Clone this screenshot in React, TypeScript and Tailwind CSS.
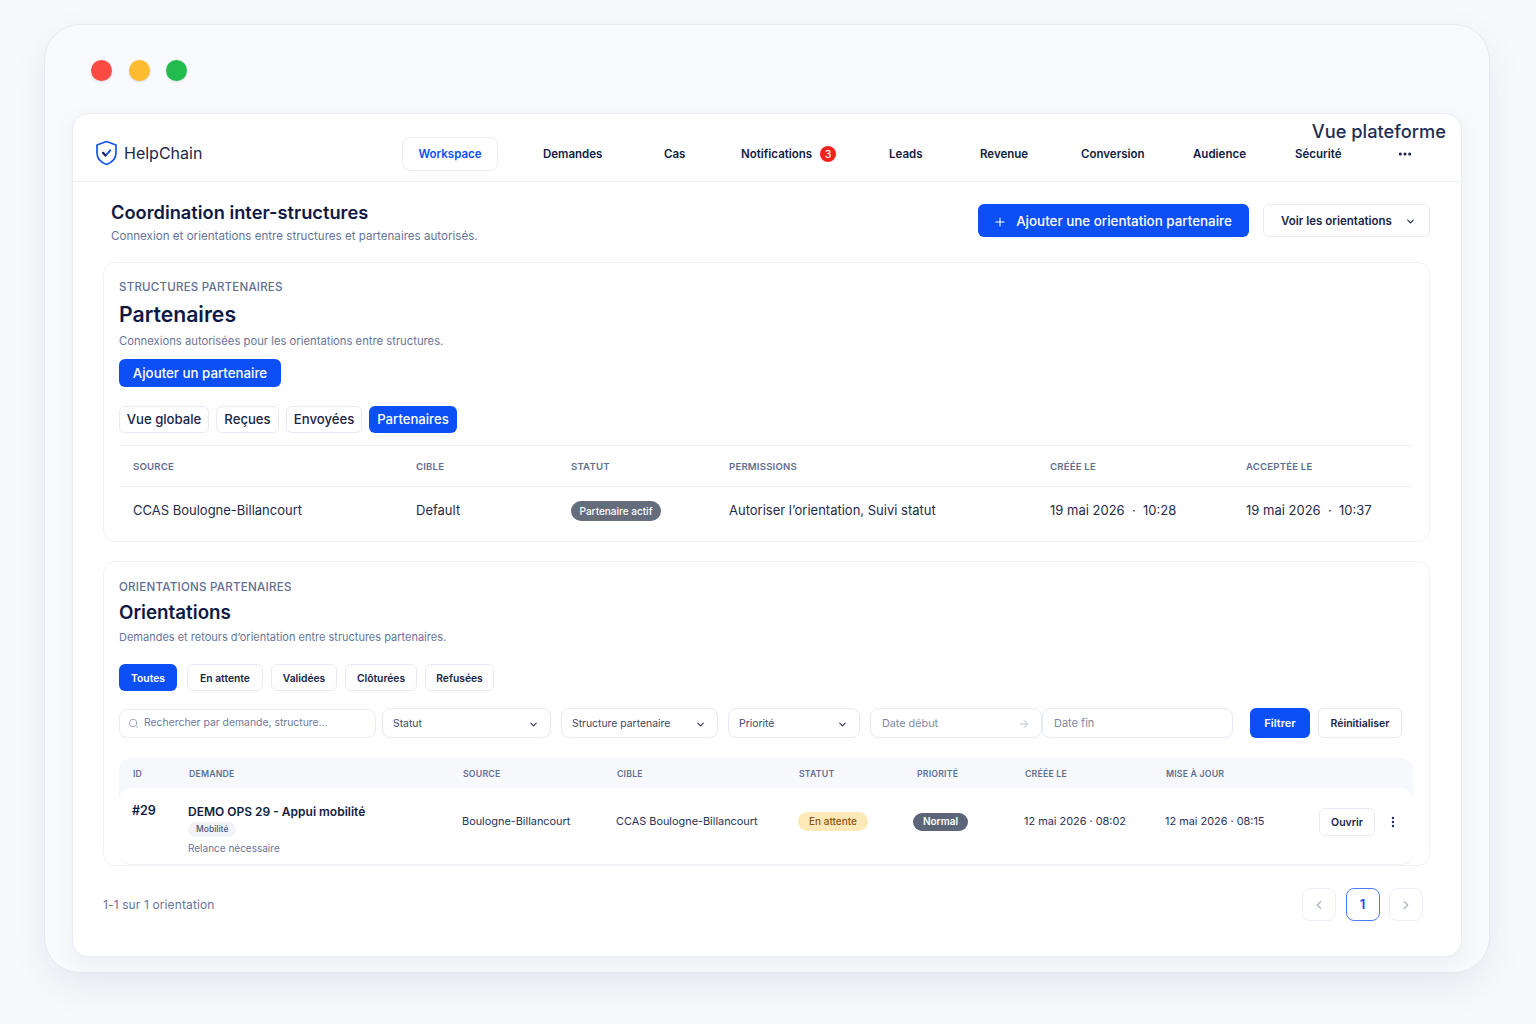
import { ArrowRight, ChevronDown, ChevronLeft, ChevronRight, Ellipsis, EllipsisVertical, Plus, Search } from "lucide-react";

const navItems = [
  { label: "Demandes", className: "ml-[45px] w-[121px] pt-[2px]" },
  { label: "Cas", className: "w-[77px] pt-[2px]" },
];
const navItemsEnd = [
  { label: "Leads", className: "w-[91px] pt-[2px]" },
  { label: "Revenue", className: "w-[101px] pt-[2px]" },
  { label: "Conversion", className: "w-[112px] pt-[2px]" },
  { label: "Audience", className: "w-[102px] pt-[2px]" },
  { label: "Sécurité", className: "w-[102px] pt-[2px]" },
];
const orientationTabs = [
  { label: "En attente", className: "ml-[10px] w-[76px]" },
  { label: "Validées", className: "ml-[8px] w-[66px]" },
  { label: "Clôturées", className: "ml-[8px] w-[72px]" },
  { label: "Refusées", className: "ml-[8px] w-[69px]" },
];
const partnerCols = "grid grid-cols-[283px_155px_158px_321px_196px_1fr]";
const orientationCols = "grid grid-cols-[56px_274px_154px_182px_115px_111px_141px_154px_1fr]";

function HeaderCell({ children, small }: { children?: React.ReactNode; small?: boolean }) {
  return (
    <div className={`font-semibold tracking-[0.02em] text-[#5f6f92] ${small ? "text-[8.75px]" : "text-[9.6px]"}`}>{children}</div>
  );
}

function Logo() {
  return (
    <svg width="23" height="26" viewBox="0 0 23 26" fill="none">
      <path
        d="M11.5 1.5 21 5v8c0 5.6-3.8 9.4-9.5 11.5C5.8 22.4 2 18.6 2 13V5l9.5-3.5Z"
        stroke="#1553f0"
        strokeWidth="1.7"
        strokeLinejoin="round"
      />
      <path d="m8 12.8 2.6 2.8 4.6-5.2" stroke="#1553f0" strokeWidth="2" strokeLinecap="round" strokeLinejoin="round" />
      <path d="m8 12.8 2.6 2.8" stroke="#16265c" strokeWidth="2" strokeLinecap="round" />
    </svg>
  );
}

function SelectBox({ label, className }: { label: string; className: string }) {
  return (
    <div className={`flex h-[30px] items-center justify-between rounded-lg border border-[#e5e9f3] bg-white pl-[10px] pr-[11px] pt-[2px] text-[10.4px] text-[#3c4766] ${className}`}>
      {label}
      <ChevronDown className="h-[11px] w-[11px] text-[#2c3654]" strokeWidth={2.4} />
    </div>
  );
}

function PageButton({ children, active }: { children: React.ReactNode; active?: boolean }) {
  return (
    <div
      className={`flex h-[33px] w-[34px] items-center justify-center rounded-lg border bg-white ${
        active ? "border-[#4f7df5] text-[13px] font-semibold text-[#0b4ff5]" : "border-[#eceff6] text-[#aab3c7]"
      }`}
    >
      {children}
    </div>
  );
}

export default function App() {
  return (
    <div className="h-[1024px] overflow-hidden bg-[#f8f9fc] pl-[44px] pr-[46px] pt-[24px] font-['Inter',sans-serif] text-[#0f1a3f]">
      <div className="h-[949px] rounded-[36px] border border-[#e6e9f1] bg-[#f9fafd] pl-[27px] pr-[27px] shadow-[0_14px_36px_rgba(40,55,100,0.08)]">
        <div className="flex h-[88px] items-start gap-[16.5px] pl-[19px] pt-[35px]">
          <span className="h-[21px] w-[21px] rounded-full bg-[#fb4b43] shadow-sm" />
          <span className="h-[21px] w-[21px] rounded-full bg-[#fdbb2f] shadow-sm" />
          <span className="h-[21px] w-[21px] rounded-full bg-[#22bb4e] shadow-sm" />
        </div>

        <div className="relative h-[844px] rounded-2xl border border-[#e9ecf4] bg-white shadow-[0_8px_24px_rgba(40,55,100,0.06)]">
          <span className="absolute right-[15px] top-[4px] text-[18.25px] font-medium text-[#1f2d55]">Vue plateforme</span>

          <header className="flex h-[68px] items-center border-b border-[#edf0f6] pl-[22px] pt-[13px]">
            <div className="-mt-[2px] flex w-[307px] items-center gap-[6px]">
              <Logo />
              <span className="text-[16px] text-[#1c2947]">HelpChain</span>
            </div>
            <nav className="flex items-center text-[11.5px] font-semibold text-[#101c42]">
              <div className="flex h-[34px] w-[96px] items-center justify-center rounded-lg border border-[#e9edf5] pt-[2px] text-[#0b4ff5]">
                Workspace
              </div>
              {navItems.map((item) => (
                <div key={item.label} className={item.className}>
                  {item.label}
                </div>
              ))}
              <div className="flex w-[148px] items-center gap-2">
                <span className="pt-[2px]">Notifications</span>
                <span className="flex h-4 w-4 items-center justify-center rounded-full bg-[#f0241c] text-[10px] font-medium text-white">3</span>
              </div>
              {navItemsEnd.map((item) => (
                <div key={item.label} className={item.className}>
                  {item.label}
                </div>
              ))}
              <Ellipsis className="h-4 w-4" strokeWidth={2.6} />
            </nav>
          </header>

          <section className="flex items-start justify-between pl-[38px] pr-[31px] pt-[18px]">
            <div>
              <h1 className="text-[18.25px] leading-[24px] font-semibold text-[#0e1a44]">Coordination inter-structures</h1>
              <p className="mt-[4px] text-[11.6px] leading-[16px] text-[#66759a]">
                Connexion et orientations entre structures et partenaires autorisés.
              </p>
            </div>
            <div className="mt-[4px] flex gap-[14px]">
              <div className="flex h-[33px] w-[271px] items-center justify-center gap-[9px] rounded-md bg-[#0b4ff5] pr-[2px] pt-[2px] text-[13.4px] font-medium text-white">
                <Plus className="h-[14px] w-[14px]" strokeWidth={1.8} />
                Ajouter une orientation partenaire
              </div>
              <div className="flex h-[33px] w-[167px] items-center justify-center gap-[13px] rounded-md border border-[#e6eaf3] bg-white pl-[4px] pt-[2px] text-[11.5px] font-semibold text-[#1a2547]">
                Voir les orientations
                <ChevronDown className="h-[11px] w-[11px]" strokeWidth={2.4} />
              </div>
            </div>
          </section>

          <div className="ml-[30px] mr-[31px] mt-[18px] h-[280px] rounded-xl border border-[#f0f2f8] pl-[15px] pr-[16px] pt-[16px]">
            <div className="text-[11.5px] leading-[16px] font-medium tracking-[0.02em] text-[#5f6f92]">STRUCTURES PARTENAIRES</div>
            <h2 className="mt-[4px] text-[21.2px] leading-[30px] font-semibold text-[#0e1a44]">Partenaires</h2>
            <p className="mt-[4px] text-[11.25px] leading-[16px] text-[#66759a]">Connexions autorisées pour les orientations entre structures.</p>
            <div className="mt-[10px] flex h-[28px] w-[162px] items-center justify-center rounded-md bg-[#0b4ff5] pt-[2px] text-[13.3px] font-medium text-white">
              Ajouter un partenaire
            </div>
            <div className="mt-[19px] flex gap-[7px] text-[13.15px] font-medium text-[#1a2547]">
              <div className="flex h-[27px] w-[90px] items-center justify-center rounded-md border border-[#e6eaf3]">Vue globale</div>
              <div className="flex h-[27px] w-[63px] items-center justify-center rounded-md border border-[#e6eaf3]">Reçues</div>
              <div className="flex h-[27px] w-[76px] items-center justify-center rounded-md border border-[#e6eaf3]">Envoyées</div>
              <div className="flex h-[27px] w-[88px] items-center justify-center rounded-md bg-[#0b4ff5] text-white">Partenaires</div>
            </div>
            <div className={`${partnerCols} mt-[12px] h-[42px] items-center border-y border-[#eef0f6] pl-[14px] pt-[2px]`}>
              <HeaderCell>SOURCE</HeaderCell>
              <HeaderCell>CIBLE</HeaderCell>
              <HeaderCell>STATUT</HeaderCell>
              <HeaderCell>PERMISSIONS</HeaderCell>
              <HeaderCell>CRÉÉE LE</HeaderCell>
              <HeaderCell>ACCEPTÉE LE</HeaderCell>
            </div>
            <div className={`${partnerCols} h-[48px] items-center pl-[14px] text-[13px] text-[#1f2a4b]`}>
              <div>CCAS Boulogne-Billancourt</div>
              <div>Default</div>
              <div className="flex h-[20px] w-[90px] items-center justify-center rounded-full bg-[#656d7d] text-[10px] font-medium text-white">
                Partenaire actif
              </div>
              <div>Autoriser l’orientation, Suivi statut</div>
              <div>19 mai 2026 &nbsp;·&nbsp; 10:28</div>
              <div>19 mai 2026 &nbsp;·&nbsp; 10:37</div>
            </div>
          </div>

          <div className="ml-[30px] mr-[31px] mt-[19px] h-[305px] rounded-xl border border-[#f0f2f8] pl-[15px] pr-[16px] pt-[17px]">
            <div className="text-[11.6px] leading-[16px] font-medium tracking-[0.02em] text-[#5f6f92]">ORIENTATIONS PARTENAIRES</div>
            <h2 className="mt-[4px] text-[18.8px] leading-[28px] font-semibold text-[#0e1a44]">Orientations</h2>
            <p className="mt-[2px] text-[11px] leading-[16px] text-[#66759a]">Demandes et retours d’orientation entre structures partenaires.</p>

            <div className="mt-[19px] flex text-[10.3px] font-semibold text-[#1a2547]">
              <div className="flex h-[27px] w-[58px] items-center justify-center rounded-md bg-[#0b4ff5] pt-[2px] text-white">Toutes</div>
              {orientationTabs.map((tab) => (
                <div key={tab.label} className={`flex h-[27px] items-center justify-center rounded-md border border-[#e6eaf3] pt-[2px] ${tab.className}`}>
                  {tab.label}
                </div>
              ))}
            </div>

            <div className="mt-[17px] flex items-center">
              <div className="flex h-[29px] w-[257px] items-center gap-[5px] rounded-lg border border-[#e9ecf5] pl-[8px] text-[10.4px] text-[#6d7a98]">
                <Search className="h-[11px] w-[11px] text-[#8b96ae]" strokeWidth={1.8} />
                Rechercher par demande, structure...
              </div>
              <SelectBox label="Statut" className="ml-[6px] w-[169px]" />
              <SelectBox label="Structure partenaire" className="ml-[10px] w-[157px]" />
              <SelectBox label="Priorité" className="ml-[10px] w-[132px]" />
              <div className="ml-[10px] flex h-[30px] w-[172px] items-center justify-between rounded-lg border border-[#e5e9f3] px-[11px] pt-[2px] text-[10.8px] text-[#7d89a5]">
                Date début
                <ArrowRight className="h-3 w-3 text-[#aab3c7]" strokeWidth={1.6} />
              </div>
              <div className="flex h-[30px] w-[191px] items-center rounded-lg border border-[#e5e9f3] px-[11px] pt-[1px] text-[11px] text-[#7d89a5]">Date fin</div>
              <div className="ml-[17px] flex h-[30px] w-[60px] items-center justify-center rounded-md bg-[#0b4ff5] text-[11px] font-semibold text-white">Filtrer</div>
              <div className="ml-[8px] flex h-[30px] w-[84px] items-center justify-center rounded-md border border-[#e6eaf3] pt-[2px] text-[10.5px] font-semibold text-[#1a2547]">
                Réinitialiser
              </div>
            </div>

            <div className="mt-[20px] rounded-xl bg-[#f7f8fc]">
              <div className={`${orientationCols} h-[30px] items-center pl-[14px] pt-[4px]`}>
                <HeaderCell small>ID</HeaderCell>
                <HeaderCell small>DEMANDE</HeaderCell>
                <HeaderCell small>SOURCE</HeaderCell>
                <HeaderCell small>CIBLE</HeaderCell>
                <HeaderCell small>STATUT</HeaderCell>
                <div className="pl-[3px]">
                  <HeaderCell small>PRIORITÉ</HeaderCell>
                </div>
                <HeaderCell small>CRÉÉE LE</HeaderCell>
                <HeaderCell small>MISE À JOUR</HeaderCell>
              </div>
              <div className={`${orientationCols} h-[77px] items-center rounded-xl border-b border-[#f0f2f7] bg-white pb-[9px] pl-[13px] text-[10.9px] text-[#27325a]`}>
                <div className="-mt-[20px] text-[12.5px] font-semibold text-[#101c42]">#29</div>
                <div className="pt-[16px]">
                  <div className="text-[12px] leading-[16px] font-semibold text-[#101c42]">DEMO OPS 29 - Appui mobilité</div>
                  <div className="mt-[2px] flex h-[15px] w-fit items-center rounded-full bg-[#f1f3f9] px-[8px] text-[8.5px] font-medium text-[#4b5778]">Mobilité</div>
                  <div className="mt-[4px] text-[10px] leading-[14px] text-[#66759a]">Relance nécessaire</div>
                </div>
                <div>Boulogne-Billancourt</div>
                <div>CCAS Boulogne-Billancourt</div>
                <div className="flex h-[19px] w-[70px] items-center justify-center rounded-full bg-[#fde8b8] text-[10px] font-medium text-[#8a5412]">En attente</div>
                <div className="flex h-[18px] w-[55px] items-center justify-center rounded-full bg-[#5d6678] text-[10px] font-semibold text-white">Normal</div>
                <div>12 mai 2026 · 08:02</div>
                <div>12 mai 2026 · 08:15</div>
                <div className="flex items-center">
                  <div className="flex h-[28px] w-[56px] items-center justify-center rounded-md border border-[#e6eaf3] pt-[2px] text-[10.5px] font-semibold text-[#1a2547]">Ouvrir</div>
                  <EllipsisVertical className="ml-[11px] h-[14px] w-[14px] text-[#27325a]" strokeWidth={2.2} />
                </div>
              </div>
            </div>
          </div>

          <footer className="ml-[30px] mr-[31px] mt-[22px] flex items-center justify-between pr-[7px]">
            <span className="text-[12px] tracking-[0.01em] text-[#66759a]">1-1 sur 1 orientation</span>
            <div className="flex gap-[9.5px]">
              <PageButton>
                <ChevronLeft className="h-[14px] w-[14px]" />
              </PageButton>
              <PageButton active>1</PageButton>
              <PageButton>
                <ChevronRight className="h-[14px] w-[14px]" />
              </PageButton>
            </div>
          </footer>
        </div>
      </div>
    </div>
  );
}
